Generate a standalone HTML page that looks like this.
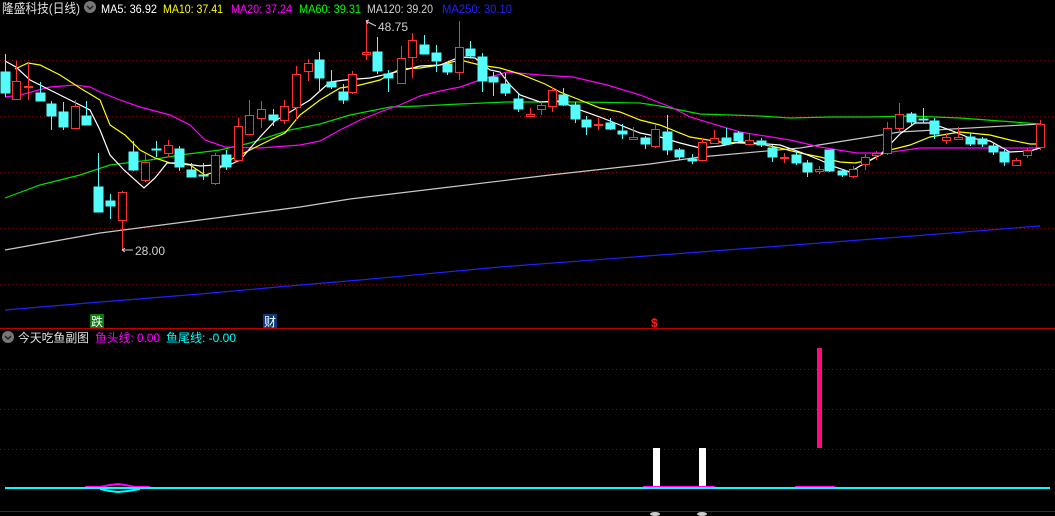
<!DOCTYPE html>
<html><head><meta charset="utf-8"><style>
html,body{margin:0;padding:0;background:#000;width:1055px;height:516px;overflow:hidden}
svg{display:block}
text{font-family:"Liberation Sans","Noto Sans CJK SC",sans-serif}
</style></head><body>
<svg width="1055" height="516" viewBox="0 0 1055 516" xmlns="http://www.w3.org/2000/svg">
<rect width="1055" height="516" fill="#000"/>
<g stroke="#7a1010" stroke-width="1" stroke-dasharray="1,3">
<line x1="0" y1="60.5" x2="1055" y2="60.5"/><line x1="0" y1="116.5" x2="1055" y2="116.5"/>
<line x1="0" y1="172.5" x2="1055" y2="172.5"/><line x1="0" y1="228.5" x2="1055" y2="228.5"/>
<line x1="0" y1="284.5" x2="1055" y2="284.5"/>
<line x1="0" y1="369.5" x2="1055" y2="369.5"/><line x1="0" y1="409.5" x2="1055" y2="409.5"/>
<line x1="0" y1="449.5" x2="1055" y2="449.5"/>
</g>
<line x1="0" y1="328.5" x2="1055" y2="328.5" stroke="#c00000"/>
<line x1="0" y1="511.5" x2="1055" y2="511.5" stroke="#a00000"/>

<g fill="none" stroke-width="1.2">
<polyline stroke="#2020ff" points="5,310 100,302 200,294 300,285 360,280 500,267 700,252 900,237 1040,226"/>
<polyline stroke="#c8c8c8" points="5,250 100,233 200,220 300,207 350,199 450,187 550,175 650,164 700,157 800,148 850,140 900,132 1040,124"/>
<polyline stroke="#00e000" points="5,198 40,185 80,175 110,165 150,160 180,155 220,150 250,143 290,130 320,124 350,115 390,107 420,106 460,104 507,102 580,102 640,103 660,106 700,114 760,116 790,118 830,117 870,117 910,116 960,118 1000,121 1040,124"/>
<polyline stroke="#ff00ff" points="5,97 20,95 50,87 75,85 90,87 100,92 120,100 140,107 170,115 190,125 205,140 225,147 260,148 300,145 320,141 340,130 360,120 380,112 400,105 420,96 440,91 460,87 480,80 507,72 540,75 573,77 607,85 640,95 673,108 690,117 740,132 790,140 820,147 857,153 885,153 920,148 1040,148"/>
<polyline stroke="#ffff00" points="15,69 28,63 40,65 60,75 80,88 100,100 110,125 125,135 140,150 155,158 170,163 190,165 205,175 215,172 230,160 250,150 270,140 285,133 300,115 320,100 340,88 360,85 380,80 400,69 420,68 440,65 460,60 480,65 500,68 520,74 545,84 560,92 580,100 600,108 620,112 640,120 660,125 690,137 720,142 760,144 780,148 800,153 820,157 840,162 855,163 870,160 890,150 910,145 930,137 960,132 990,135 1010,140 1030,144 1040,144"/>
<polyline stroke="#ffffff" points="5,61 16,67 30,80 50,90 70,100 90,110 100,130 110,155 124,170 144,188 155,178 167,163 180,163 200,166 215,165 225,167 240,160 260,137 275,121 290,112 310,100 330,82 345,80 370,78 400,71 420,66 440,65 460,57 475,58 490,70 500,72 510,85 520,95 540,102 560,101 580,110 600,117 620,125 640,133 660,137 680,143 700,148 720,146 740,142 755,143 780,145 800,152 820,160 835,167 850,172 860,166 880,155 900,134 915,123 930,123 950,130 970,138 990,141 1010,152 1030,151 1040,148"/>
</g>

<g stroke="#54fcfc" fill="#54fcfc" stroke-width="1">
<path d="M5.5 54V97M40.5 82V101M51.5 101V130M63.5 102V130M86.5 101V125M98.5 153V212M110.5 194V219M133.5 141V171M156.5 141V157M179.5 146V171M191.5 163V177M203.5 163V180M226.5 150V170M273.5 109V126M319.5 52V92M331.5 70V89M343.5 84V104M377.5 37V74M388.5 70V92M424.5 35V54M436.5 45V72M447.5 62V75M470.5 41V57M482.5 53V92M493.5 72V96M505.5 73V96M518.5 94V112M563.5 88V106M575.5 102V123M586.5 116V135M610.5 118V130M622.5 124V139M645.5 136V149M667.5 115V155M679.5 148V160M692.5 154V164M726.5 128V145M738.5 131V142M761.5 138V147M772.5 145V162M796.5 152V165M807.5 160V177M829.5 150V172M842.5 169V177M911.5 112V125M923.5 108V123M934.5 118V139M970.5 133V146M982.5 137V147M993.5 143V155M1004.5 150V166"/>
<rect x="1" y="72" width="9" height="21"/><rect x="36" y="93" width="9" height="8"/><rect x="47" y="104" width="9" height="12"/>
<rect x="59" y="112" width="9" height="15"/><rect x="82" y="116" width="9" height="9"/><rect x="94" y="187" width="9" height="25"/>
<rect x="106" y="201" width="9" height="5"/><rect x="129" y="152" width="9" height="18"/><rect x="152" y="149" width="9" height="1"/>
<rect x="175" y="149" width="9" height="18"/><rect x="187" y="170" width="9" height="7"/><rect x="199" y="175" width="9" height="1"/>
<rect x="222" y="155" width="9" height="12"/><rect x="269" y="115" width="9" height="5"/><rect x="315" y="60" width="9" height="18"/>
<rect x="327" y="82" width="9" height="5"/><rect x="339" y="92" width="9" height="8"/><rect x="373" y="52" width="9" height="19"/>
<rect x="384" y="74" width="9" height="4"/><rect x="420" y="45" width="9" height="9"/><rect x="432" y="53" width="9" height="8"/>
<rect x="443" y="64" width="9" height="8"/><rect x="466" y="49" width="9" height="7"/><rect x="478" y="57" width="9" height="24"/>
<rect x="489" y="77" width="9" height="5"/><rect x="501" y="84" width="9" height="9"/><rect x="514" y="99" width="9" height="10"/>
<rect x="559" y="95" width="9" height="10"/><rect x="571" y="105" width="9" height="14"/><rect x="582" y="120" width="9" height="7"/>
<rect x="606" y="123" width="9" height="6"/><rect x="618" y="131" width="9" height="3"/><rect x="641" y="138" width="9" height="6"/>
<rect x="663" y="132" width="9" height="18"/><rect x="675" y="150" width="9" height="7"/><rect x="688" y="159" width="9" height="2"/>
<rect x="722" y="138" width="9" height="6"/><rect x="734" y="133" width="9" height="8"/><rect x="757" y="141" width="9" height="4"/>
<rect x="768" y="148" width="9" height="9"/><rect x="792" y="155" width="9" height="8"/><rect x="803" y="163" width="9" height="9"/>
<rect x="825" y="150" width="9" height="21"/><rect x="838" y="171" width="9" height="4"/><rect x="907" y="114" width="9" height="8"/>
<rect x="919" y="119" width="9" height="1"/><rect x="930" y="121" width="9" height="13"/><rect x="966" y="137" width="9" height="7"/>
<rect x="978" y="139" width="9" height="5"/><rect x="989" y="146" width="9" height="6"/><rect x="1000" y="152" width="9" height="10"/>
</g>
<g stroke="#ff3232" fill="#000" stroke-width="1">
<path d="M16.5 61V99M28.5 63V100M75.5 100V129M122.5 191V250M145.5 154V182M168.5 140V157M215.5 153V185M238.5 118V160M249.5 100V134M261.5 101V128M284.5 100V124M296.5 66V120M308.5 59V81M352.5 71V94M366.5 20V60M401.5 46V83M412.5 33V78M459.5 21V80M530.5 108V116M541.5 102V115M552.5 87V112M598.5 118V130M633.5 127V139M655.5 124V148M702.5 138V160M714.5 130V143M749.5 133V144M784.5 153V163M819.5 166V174M853.5 166V178M865.5 154V170M876.5 151V160M887.5 122V155M899.5 103V133M946.5 133V144M958.5 127V139M1016.5 158V166M1027.5 148V158M1040.5 120V150"/>
<rect x="12.5" y="81.5" width="8" height="18"/><rect x="24.5" y="86.5" width="8" height="1"/><rect x="71.5" y="106.5" width="8" height="22"/>
<rect x="118.5" y="192.5" width="8" height="28"/><rect x="141.5" y="162.5" width="8" height="18"/><rect x="164.5" y="145.5" width="8" height="8"/>
<rect x="211.5" y="155.5" width="8" height="28"/><rect x="234.5" y="126.5" width="8" height="34"/><rect x="245.5" y="115.5" width="8" height="19"/>
<rect x="257.5" y="109.5" width="8" height="9"/><rect x="280.5" y="106.5" width="8" height="14"/><rect x="292.5" y="74.5" width="8" height="33"/>
<rect x="304.5" y="63.5" width="8" height="8"/><rect x="348.5" y="74.5" width="8" height="18"/><rect x="362.5" y="52.5" width="8" height="2"/>
<rect x="397.5" y="58.5" width="8" height="25"/><rect x="408.5" y="40.5" width="8" height="17"/><rect x="455.5" y="47.5" width="8" height="25"/>
<rect x="526.5" y="114.5" width="8" height="2"/><rect x="537.5" y="105.5" width="8" height="4"/><rect x="548.5" y="90.5" width="8" height="16"/>
<rect x="594.5" y="124.5" width="8" height="1"/><rect x="629.5" y="137.5" width="8" height="2"/><rect x="651.5" y="129.5" width="8" height="17"/>
<rect x="698.5" y="142.5" width="8" height="18"/><rect x="710.5" y="138.5" width="8" height="5"/><rect x="745.5" y="140.5" width="8" height="4"/>
<rect x="780.5" y="157.5" width="8" height="1"/><rect x="815.5" y="169.5" width="8" height="2"/><rect x="849.5" y="169.5" width="8" height="7"/>
<rect x="861.5" y="157.5" width="8" height="7"/><rect x="872.5" y="153.5" width="8" height="2"/><rect x="883.5" y="128.5" width="8" height="25"/>
<rect x="895.5" y="114.5" width="8" height="14"/><rect x="942.5" y="137.5" width="8" height="3"/><rect x="954.5" y="137.5" width="8" height="2"/>
<rect x="1012.5" y="160.5" width="8" height="5"/><rect x="1023.5" y="150.5" width="8" height="5"/><rect x="1036.5" y="124.5" width="8" height="23"/>
</g>

<g stroke="#ccc" fill="none" stroke-width="1"><path d="M366 21L376 26M366 21L369 20M366 21L368 24"/><path d="M122 250H133M122 250L125 248M122 250L125 252"/></g>
<text x="378" y="31" fill="#d0d0d0" font-size="12">48.75</text>
<text x="135" y="255" fill="#d0d0d0" font-size="12">28.00</text>

<rect x="90" y="314" width="14" height="14" fill="#0a7a0a"/>
<text x="91" y="326" fill="#fff" font-size="12">跌</text>
<rect x="263" y="314" width="14" height="14" fill="#0a3a7a"/>
<text x="264" y="326" fill="#fff" font-size="12">财</text>
<text x="651" y="327" fill="#ff2020" font-size="12" font-weight="bold">$</text>

<text x="2" y="13" fill="#e0e0e0" font-size="13" textLength="78" lengthAdjust="spacingAndGlyphs">隆盛科技(日线)</text>
<circle cx="90" cy="7" r="6" fill="#777"/><path d="M87 6L90 9L93 6" stroke="#222" stroke-width="1.5" fill="none"/>
<g font-size="12" lengthAdjust="spacingAndGlyphs">
<text x="101" y="13" fill="#fff" textLength="56" lengthAdjust="spacingAndGlyphs">MA5: 36.92</text>
<text x="163" y="13" fill="#ffff00" textLength="60" lengthAdjust="spacingAndGlyphs">MA10: 37.41</text>
<text x="231" y="13" fill="#ff00ff" textLength="61" lengthAdjust="spacingAndGlyphs">MA20: 37.24</text>
<text x="299" y="13" fill="#00ff00" textLength="62" lengthAdjust="spacingAndGlyphs">MA60: 39.31</text>
<text x="367" y="13" fill="#d0d0d0" textLength="66" lengthAdjust="spacingAndGlyphs">MA120: 39.20</text>
<text x="442" y="13" fill="#2020ff" textLength="70" lengthAdjust="spacingAndGlyphs">MA250: 30.10</text>
</g>

<circle cx="8" cy="337" r="6" fill="#777"/><path d="M5 336L8 339L11 336" stroke="#222" stroke-width="1.5" fill="none"/>
<text x="18" y="342" fill="#e0e0e0" font-size="12" textLength="71" lengthAdjust="spacingAndGlyphs">今天吃鱼副图</text>
<text x="95" y="342" fill="#ff00ff" font-size="12" textLength="65" lengthAdjust="spacingAndGlyphs">鱼头线: 0.00</text>
<text x="166" y="342" fill="#00ffff" font-size="12" textLength="70" lengthAdjust="spacingAndGlyphs">鱼尾线: -0.00</text>

<rect x="817" y="348" width="5" height="100" fill="#ff0a7e"/>
<rect x="653" y="448" width="7" height="40" fill="#fff"/>
<rect x="699" y="448" width="7" height="40" fill="#fff"/>
<path d="M85 487H100L110 485L118 484L125 485L135 487H150" stroke="#ff00ff" stroke-width="2" fill="none"/>
<path d="M643 487H715M795 487H835" stroke="#ff00ff" stroke-width="2"/>
<line x1="5" y1="488" x2="1050" y2="488" stroke="#00ffff" stroke-width="2"/>
<path d="M100 489L110 491L118 492L128 491L140 489" stroke="#00ffff" stroke-width="2" fill="none"/>
<ellipse cx="655" cy="514" rx="5" ry="2" fill="#ccc"/><ellipse cx="702" cy="514" rx="5" ry="2" fill="#ccc"/>
</svg>
</body></html>
